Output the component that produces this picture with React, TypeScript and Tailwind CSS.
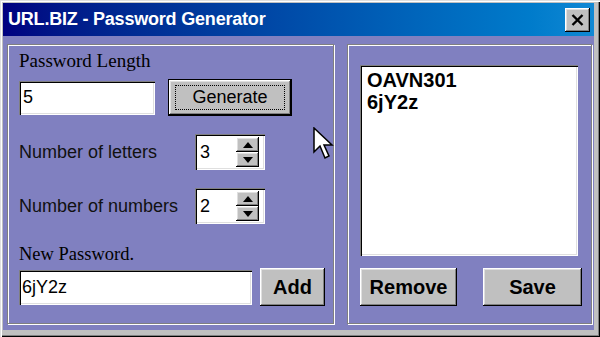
import React from "react";

const raised =
  "bg-[#c0c0c0] shadow-[inset_-1px_-1px_0_#000,inset_1px_1px_0_#fff,inset_-2px_-2px_0_#808080,inset_2px_2px_0_#dfdfdf]";
const sunken =
  "bg-white shadow-[inset_1px_1px_0_#808080,inset_2px_2px_0_#000,inset_-1px_-1px_0_#fff,inset_-2px_-2px_0_#dfdfdf]";
const etched =
  "border border-[#808080] shadow-[inset_1px_1px_0_#fff,1px_1px_0_#fff]";

function Spinner({ value }: { value: string }) {
  return (
    <div className={`${sunken} flex h-[36px] w-[70px] items-center pl-[5px] pr-[6px]`}>
      <span className="flex-1 text-[18px] leading-none text-black">{value}</span>
      <div className="flex h-[30px] w-[23px] flex-col">
        <div className={`${raised} flex flex-1 items-center justify-center`}>
          <svg width="10" height="6" viewBox="0 0 10 6">
            <path d="M5 0 L10 6 L0 6 Z" fill="#000" />
          </svg>
        </div>
        <div className={`${raised} flex flex-1 items-center justify-center`}>
          <svg width="10" height="6" viewBox="0 0 10 6">
            <path d="M0 0 L10 0 L5 6 Z" fill="#000" />
          </svg>
        </div>
      </div>
    </div>
  );
}

export default function App() {
  return (
    <div className="relative flex h-[337px] w-[600px] flex-col bg-[#c0c0c0] pb-[7px] pl-[3px] pr-[6px] pt-[3px] font-['Liberation_Sans',Arial,sans-serif] shadow-[inset_1px_1px_0_#dfdfdf,inset_2px_2px_0_#fff,inset_-1px_-1px_0_#000,inset_-2px_-2px_0_#808080]">
      {/* Title bar */}
      <div className="flex h-[33px] items-center justify-between bg-gradient-to-r from-[#000080] to-[#1088d4] pl-[5px] pr-[4px]">
        <span className="text-[18px] font-bold tracking-[-0.2px] text-white">
          URL.BIZ - Password Generator
        </span>
        <div className={`${raised} flex h-[24px] w-[25px] items-center justify-center`}>
          <svg width="13" height="12" viewBox="0 0 13 12">
            <path d="M1.5 1 L11.5 11 M11.5 1 L1.5 11" stroke="#000" strokeWidth="2.4" />
          </svg>
        </div>
      </div>

      {/* Body */}
      <div className="flex flex-1 gap-[13px] bg-[#8080c0] pl-[4px] pt-[8px]">
        {/* Left group */}
        <div className={`${etched} flex h-[280px] w-[327px] flex-col pl-[11px]`}>
          <div className="mt-[6px] font-['Liberation_Serif',serif] text-[19px] leading-[20px] text-black">
            Password Length
          </div>
          <div className="mt-[8px] flex items-center">
            <div className={`${sunken} flex h-[34px] w-[136px] items-center pl-[4px] text-[18px] text-black`}>
              5
            </div>
            <button className="ml-[13px] flex h-[37px] w-[124px] items-center justify-center border border-black bg-[#c0c0c0] p-0 shadow-[inset_-1px_-1px_0_#000,inset_1px_1px_0_#fff,inset_-2px_-2px_0_#808080,inset_2px_2px_0_#dfdfdf]">
              <span className="flex h-[25px] w-[110px] items-center justify-center border border-dotted border-black text-[18px] text-black">
                Generate
              </span>
            </button>
          </div>
          <div className="mt-[18px] flex items-center">
            <span className="w-[176px] text-[18px] text-[#111]">Number of letters</span>
            <Spinner value="3" />
          </div>
          <div className="mt-[18px] flex items-center">
            <span className="w-[176px] text-[18px] text-[#111]">Number of numbers</span>
            <Spinner value="2" />
          </div>
          <div className="mt-[20px] font-['Liberation_Serif',serif] text-[18.5px] leading-[20px] text-black">
            New Password.
          </div>
          <div className="mt-[4px] flex items-center">
            <div className={`${sunken} flex h-[35px] w-[233px] items-center pl-[3px] text-[18px] text-black`}>
              6jY2z
            </div>
            <button className={`${raised} ml-[8px] flex h-[38px] w-[65px] items-center justify-center text-[20px] font-bold text-black`}>
              Add
            </button>
          </div>
        </div>

        {/* Right group */}
        <div className={`${etched} flex h-[280px] w-[245px] flex-col pl-[12px]`}>
          <div className={`${sunken} mt-[20px] h-[191px] w-[218px] pl-[7px] pt-[4px] text-[20px] font-bold leading-[22px] text-black`}>
            <div>OAVN301</div>
            <div>6jY2z</div>
          </div>
          <div className="mt-[12px] flex gap-[26px]">
            <button className={`${raised} flex h-[38px] w-[97px] items-center justify-center text-[20px] font-bold text-black`}>
              Remove
            </button>
            <button className={`${raised} flex h-[38px] w-[99px] items-center justify-center text-[20px] font-bold text-black`}>
              Save
            </button>
          </div>
        </div>
      </div>

      {/* Mouse pointer */}
      <svg
        className="absolute left-[313px] top-[127px]"
        width="22"
        height="34"
        viewBox="0 0 22 34"
      >
        <path
          d="M1 1 L1 25 L7 19 L12 31 L16 29 L11 18 L19 18 Z"
          fill="#fff"
          stroke="#000"
          strokeWidth="1.5"
          strokeLinejoin="miter"
        />
      </svg>
    </div>
  );
}
